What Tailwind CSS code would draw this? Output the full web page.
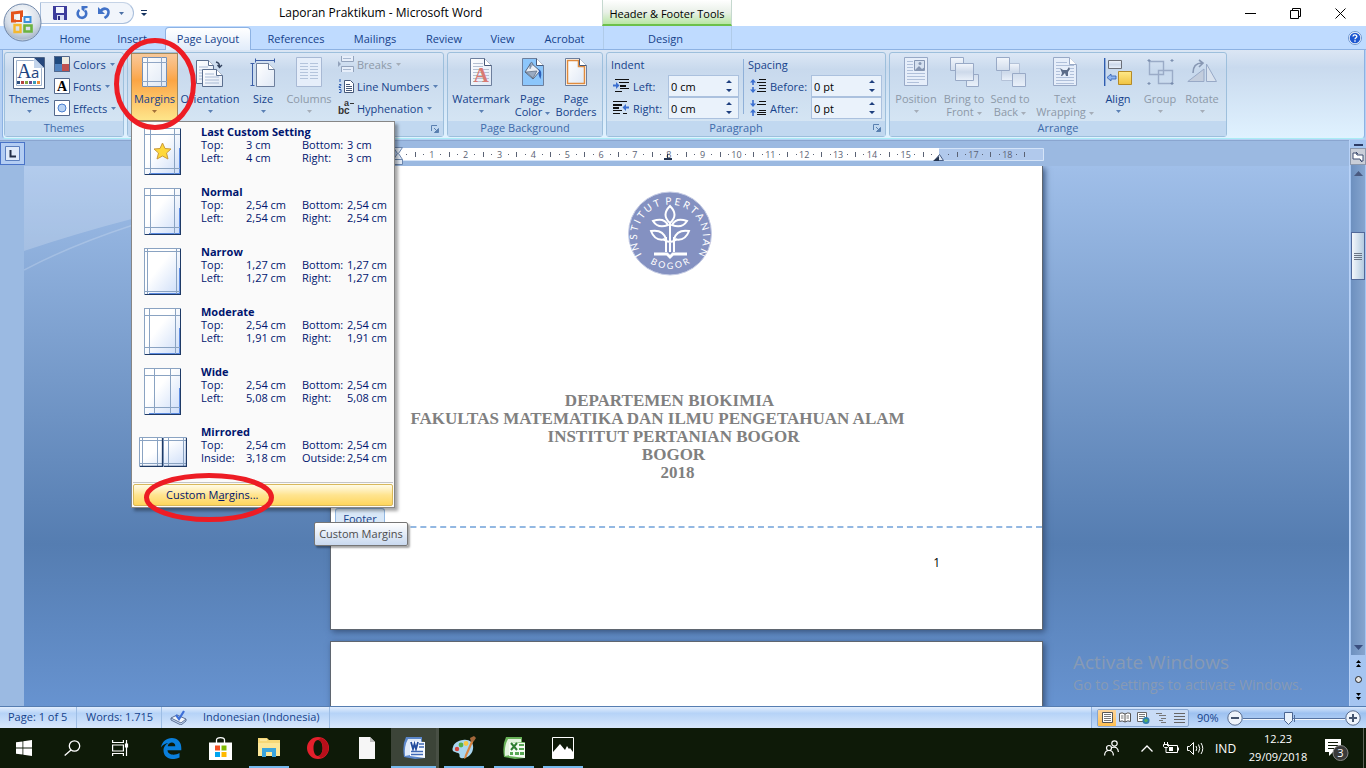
<!DOCTYPE html>
<html lang="en">
<head>
<meta charset="utf-8">
<title>Laporan Praktikum - Microsoft Word</title>
<script src="https://cdn.jsdelivr.net/npm/@tailwindcss/browser@4"></script>
</head>
<body class="relative flex h-screen flex-col overflow-hidden font-['Open_Sans','Noto_Sans',sans-serif] text-[11px] leading-[13px] text-[#15428b]">

<svg class="absolute h-0 w-0" aria-hidden="true">
  <defs>
    <linearGradient id="paper" x1="0" y1="0" x2="1" y2="1"><stop offset=".4" stop-color="#fff"/><stop offset="1" stop-color="#cbdcf8"/></linearGradient>
    <linearGradient id="sheet" x1="0" y1="0" x2="1" y2="1"><stop offset="0" stop-color="#fff"/><stop offset="1" stop-color="#dfe8f5"/></linearGradient>
    <linearGradient id="steel" x1="0" y1="0" x2="0" y2="1"><stop offset="0" stop-color="#f2f6fc"/><stop offset=".5" stop-color="#cdd9ea"/><stop offset="1" stop-color="#eaf1fa"/></linearGradient>
    <linearGradient id="gold" x1="0" y1="0" x2="0" y2="1"><stop offset="0" stop-color="#ffe989"/><stop offset="1" stop-color="#f0c341"/></linearGradient>
    <symbol id="thumb" viewBox="0 0 37 47"><rect width="37" height="47" fill="#8aa3c2"/><rect x="1" y="1" width="35" height="45" fill="url(#paper)"/><path d="M36.500 1v46M1 46.500h36" stroke="#1f3a66"/><path d="M35.500 20v26M5 45.500h31" stroke="#5b8ae0"/></symbol>
    <symbol id="down" viewBox="0 0 5 3"><path d="M0 0h5L2.500 3z" fill="currentColor"/></symbol>
    <symbol id="launch" viewBox="0 0 8 8"><path d="M.5 6V.5H6" fill="none" stroke="#5a80b0"/><path d="M3 3l2 2" stroke="#5a80b0"/><path d="M7.500 3.500v4h-4z" fill="#5a80b0" stroke="#5a80b0"/></symbol>
  </defs>
</svg>

<!-- Title bar -->
<header class="relative flex h-[26px] shrink-0 items-stretch bg-white text-black">
  <div class="ml-[40px] flex h-[22px] w-[94px] items-center gap-2 self-start rounded-r-full border border-[#a9bfdc] border-t-[#c5d3e6] bg-[#f1f5fb] pl-[12px] mt-[2px]">
    <button aria-label="Save"><svg class="h-[14px] w-[14px]" viewBox="0 0 14 14"><path d="M0 0h14v14H1l-1-1z" fill="#3c3c9c"/><path d="M3 1h8v6H3z" fill="#f3f6ff"/><path d="M4 9h7v5H4z" fill="#d8def5"/><path d="M5 10h2v4H5z" fill="#2c2c80"/></svg></button>
    <button aria-label="Redo"><svg class="h-[14px] w-[14px]" viewBox="0 0 14 14"><path d="M4.500 4A4.300 4.300 0 1 0 10 4.500" fill="none" stroke="#4172c8" stroke-width="2.600"/><path d="M6.500 0h6v2l-3 .5V6l-3-2.500z" fill="#4172c8"/></svg></button>
    <button aria-label="Undo"><svg class="h-[14px] w-[14px]" viewBox="0 0 14 14"><path d="M3 6c3-5 9-4 8.500.5C11.300 10 9 11 7.500 12" fill="none" stroke="#4172c8" stroke-width="2.600"/><path d="M1 1v7h7z" fill="#4172c8"/></svg></button>
    <button aria-label="Undo list"><svg class="h-[3px] w-[5px] text-[#4a6fa5]"><use href="#down"/></svg></button>
  </div>
  <button aria-label="Customize toolbar" class="ml-[7px] self-center"><svg class="h-[7px] w-[6px]" viewBox="0 0 6 7"><path d="M0 .5h6" stroke="#15325f"/><path d="M0 3h6L3 6z" fill="#15325f"/></svg></button>
  <h1 class="ml-[132px] w-[196px] self-center text-center text-[12px] leading-[16px] whitespace-nowrap">Laporan Praktikum - Microsoft Word</h1>
  <div class="ml-[127px] flex w-[130px] items-center justify-center border-x border-b-2 border-x-[#c5d8cf] border-b-[#6cc04a] bg-linear-to-b from-white via-[#e9f0e8] to-[#b9e6a4] pt-[2px] whitespace-nowrap">Header &amp; Footer Tools</div>
  <div class="ml-auto flex items-center">
    <button aria-label="Minimize" class="flex w-[46px] justify-center"><svg class="h-[11px] w-[11px]" viewBox="0 0 11 11"><path d="M0 5.500h11" stroke="#000"/></svg></button>
    <button aria-label="Restore" class="flex w-[45px] justify-center"><svg class="h-[11px] w-[11px]" viewBox="0 0 11 11"><path d="M.5 2.500h8v8h-8zM2.500 2V.5h8v8H9" fill="none" stroke="#000"/></svg></button>
    <button aria-label="Close" class="flex w-[45px] justify-center"><svg class="h-[11px] w-[11px]" viewBox="0 0 11 11"><path d="M.5.500l10 10M10.500.500l-10 10" stroke="#000"/></svg></button>
    <span class="w-[3px]"></span>
  </div>
</header>

<!-- Ribbon tabs -->
<nav class="flex h-[24px] shrink-0 items-stretch border-b border-[#8db2e3] bg-[#bfdbff] pl-[46px] leading-[25px] whitespace-nowrap">
  <button class="w-[58px]">Home</button>
  <button class="w-[56px]">Insert</button>
  <button class="-mb-px ml-[5px] mt-px w-[86px] rounded-t-[4px] border border-b-0 border-[#8db2e3] bg-linear-to-b from-white to-[#e1ecfa] leading-[22px]">Page Layout</button>
  <button class="w-[90px]">References</button>
  <button class="w-[68px]">Mailings</button>
  <button class="w-[70px]">Review</button>
  <button class="w-[47px]">View</button>
  <button class="w-[77px]">Acrobat</button>
  <button class="w-[129px] border-x border-[#b0cbe9] pr-1">Design</button>
  <button aria-label="Help" class="ml-auto mr-1 self-center"><svg class="h-[14px] w-[14px]" viewBox="0 0 14 14"><circle cx="7" cy="7" r="6.500" fill="#fff" stroke="#6d94ce"/><circle cx="7" cy="7" r="5.300" fill="#1d56d0"/><path d="M5 5.500c.2-2.300 4-2 3.800.2C8.700 6.800 7 6.800 7 8.300M7 9.300v1.400" fill="none" stroke="#fff" stroke-width="1.400"/></svg></button>
</nav>

<!-- Ribbon -->
<section class="flex h-[90px] shrink-0 bg-[#b5d0f3] pb-[1px] pl-[2px] pr-[1px]">
 <div class="flex min-w-0 flex-1 items-start gap-[3px] rounded-b-[4px] border border-t-0 border-[#8db2e3] border-b-[#a9ecf5] bg-linear-to-b from-[#dbe6f4] via-[#c9daee] via-20% to-[#e0f2ff] pl-px pt-[2px]">

  <div class="flex h-[85px] w-[120px] shrink-0 flex-col rounded-[3px] border border-[#9dbfdc] bg-linear-to-b from-[#dce7f5] via-[#c8d9ed] via-20% to-[#d8e8f5]">
    <div class="flex flex-1">
      <button class="flex w-[48px] flex-col items-center pt-[4px]">
        <span class="h-[35px]"><svg class="h-[32px] w-[32px]" viewBox="0 0 32 32"><path d="M.5.500h31v31H.5z" fill="#fff" stroke="#4f6485"/><path d="M3.500 3.500h17l8 8v17h-25z" fill="#fff" stroke="#9fb2cc"/><path d="M21 1h10v10z" fill="#26477c"/><path d="M21 1v10h10z" fill="#c2d4ec"/><text x="4" y="21" font-family="Liberation Serif" font-size="20" fill="#1d4481">A</text><text x="18" y="21" font-family="Open Sans" font-size="15" fill="#1d4481">a</text><path d="M4 24h3v3H4z" fill="#30517f"/><path d="M8 24h3v3H8z" fill="#b54441"/><path d="M12 24h3v3h-3z" fill="#83a543"/><path d="M16 24h3v3h-3z" fill="#6a4d92"/><path d="M20 24h3v3h-3z" fill="#3c9cb8"/><path d="M24 24h3v3h-3z" fill="#f08c35"/></svg></span>
        <span>Themes</span><svg class="mt-[5px] h-[3px] w-[5px] text-[#5a80b4]"><use href="#down"/></svg>
      </button>
      <div class="flex flex-col pl-px">
        <button class="flex h-[22px] items-center gap-[3px]"><svg class="h-[16px] w-[16px]" viewBox="0 0 16 16"><path d="M0 0h8v8H0z" fill="#1f497d"/><path d="M8 0h8v8H8z" fill="#eeece1"/><path d="M0 8h8v8H0z" fill="#4f81bd"/><path d="M8 8h8v8H8z" fill="#c0504d"/><path d="M.5.500h15v15H.5z" fill="none" stroke="#53688c"/></svg>Colors<svg class="ml-px h-[3px] w-[5px] text-[#5a80b4]"><use href="#down"/></svg></button>
        <button class="flex h-[22px] items-center gap-[3px]"><svg class="h-[16px] w-[16px]" viewBox="0 0 16 16"><path d="M.5.500h15v15H.5z" fill="#fff" stroke="#53688c"/><text x="8" y="13" text-anchor="middle" font-family="Liberation Serif" font-size="14" font-weight="bold">A</text></svg>Fonts<svg class="ml-px h-[3px] w-[5px] text-[#5a80b4]"><use href="#down"/></svg></button>
        <button class="flex h-[22px] items-center gap-[3px]"><svg class="h-[16px] w-[16px]" viewBox="0 0 16 16"><path d="M.5.500h15v15H.5z" fill="#fff" stroke="#53688c"/><circle cx="8" cy="8" r="4" fill="#b9d3f4" stroke="#4a7fcf"/></svg>Effects<svg class="ml-px h-[3px] w-[5px] text-[#5a80b4]"><use href="#down"/></svg></button>
      </div>
    </div>
    <div class="h-[15px] bg-[#c1d8f0] text-center text-[#3e6aaa]">Themes</div>
  </div>

  <div class="flex h-[85px] w-[317px] shrink-0 flex-col rounded-[3px] border border-[#9dbfdc] bg-linear-to-b from-[#dce7f5] via-[#c8d9ed] via-20% to-[#d8e8f5]">
    <div class="flex flex-1 pl-[3px]">
      <button class="flex w-[47px] flex-col items-center border border-[#a08a60] bg-linear-to-b from-[#f8c99a] via-[#fba544] via-40% to-[#fde58a] pt-[3px]">
        <span class="h-[35px]"><svg class="h-[30px] w-[25px]" viewBox="0 0 25 30"><path d="M.5.500h24v29H.5z" fill="url(#sheet)" stroke="#7590b5"/><path d="M5.500 0v30M19.500 0v30M0 5.500h25M0 24.500h25" stroke="#8fa5c4"/></svg></span>
        <span>Margins</span><svg class="mt-[5px] h-[3px] w-[5px] text-[#a0703a]"><use href="#down"/></svg>
      </button>
      <button class="flex w-[64px] flex-col items-center pt-[4px]">
        <span class="h-[35px]"><svg class="h-[32px] w-[28px]" viewBox="0 0 28 32"><path d="M.5 3.500h12l5 5v18H.5z" fill="url(#sheet)" stroke="#5b6f8f"/><path d="M12.500 3.500v5h5" fill="#fff" stroke="#5b6f8f"/><path d="M3 10h9M3 13h12M3 16h10M3 19h10M3 22h10" stroke="#a9bad4"/><path d="M6.500 12.500h14l6 6v11h-20z" fill="url(#sheet)" stroke="#5b6f8f"/><path d="M20.500 12.500v6h6" fill="#fff" stroke="#5b6f8f"/><path d="M9 17h9M9 20h14M9 23h14M9 26h14" stroke="#a9bad4"/><path d="M20 5q4 1 3.500 5M21.500 8l2 2.500L26 8" fill="none" stroke="#33435f" stroke-width="1.300"/></svg></span>
        <span>Orientation</span><svg class="mt-[5px] h-[3px] w-[5px] text-[#5a80b4]"><use href="#down"/></svg>
      </button>
      <button class="flex w-[42px] flex-col items-center pt-[4px]">
        <span class="h-[35px]"><svg class="h-[32px] w-[26px]" viewBox="0 0 26 32"><path d="M6.500 6.500h12l6 6v17h-18z" fill="url(#sheet)" stroke="#6d7f9d"/><path d="M18.500 6.500v6h6" fill="#fff" stroke="#6d7f9d"/><path d="M5 3.500h20M5.500 1.500v4M24.500 1.500v4M2.500 6v23M.5 6.500h4M.5 28.500h4" stroke="#3c5ea6" fill="none"/></svg></span>
        <span>Size</span><svg class="mt-[5px] h-[3px] w-[5px] text-[#5a80b4]"><use href="#down"/></svg>
      </button>
      <button disabled class="flex w-[50px] flex-col items-center pt-[4px] text-[#8d99a8]">
        <span class="h-[35px]"><svg class="h-[30px] w-[26px]" viewBox="0 0 26 30"><path d="M.5.500h25v29H.5z" fill="#e6eefa" stroke="#a8b9d4"/><path d="M4 6.500h8M4 9.500h8M4 12.500h8M4 15.500h8M4 18.500h8M4 21.500h8M14 6.500h8M14 9.500h8M14 12.500h8M14 15.500h8M14 18.500h8M14 21.500h8" stroke="#b4c4dc"/></svg></span>
        <span>Columns</span><svg class="mt-[5px] h-[3px] w-[5px] text-[#a5adb8]"><use href="#down"/></svg>
      </button>
      <div class="ml-[4px] flex flex-col">
        <button disabled class="flex h-[22px] items-center gap-[3px] text-[#8d99a8]"><svg class="h-[16px] w-[16px]" viewBox="0 0 16 16"><path d="M3.500 0v5.500h12V0M3.500 16v-5.500h12V16" fill="#e6eefa" stroke="#93a3bc"/><path d="M5 2.500h8M5 13.500h8" stroke="#a8b8d0"/><path d="M0 5l3 3-3 3z" fill="#93a3bc"/></svg>Breaks<svg class="ml-px h-[3px] w-[5px] text-[#a5adb8]"><use href="#down"/></svg></button>
        <button class="flex h-[22px] items-center gap-[3px]"><svg class="h-[16px] w-[16px]" viewBox="0 0 16 16"><path d="M6.500 2.500h6l3 3v9h-9z" fill="#fff" stroke="#46597a"/><path d="M8 6.500h4M8 8.500h6M8 10.500h6M8 12.500h6" stroke="#46597a"/><path d="M2 1v3M1 6.500h2v1l-2 1v1h2M1 11.500h2v3H1" fill="none" stroke="#2f5db0"/></svg>Line Numbers<svg class="ml-px h-[3px] w-[5px] text-[#5a80b4]"><use href="#down"/></svg></button>
        <button class="flex h-[22px] items-center gap-[3px]"><svg class="h-[16px] w-[16px]" viewBox="0 0 16 16" fill="#333"><text x="0" y="14" font-family="Liberation Sans" font-weight="bold" font-size="10">bc</text><text x="6" y="6" font-family="Liberation Sans" font-weight="bold" font-size="9">a</text><path d="M12 3h4v1H12z"/></svg>Hyphenation<svg class="ml-px h-[3px] w-[5px] text-[#5a80b4]"><use href="#down"/></svg></button>
      </div>
    </div>
    <div class="flex h-[15px] items-center justify-end bg-[#c1d8f0] pr-[4px]"><button aria-label="Page Setup options"><svg class="h-2 w-2"><use href="#launch"/></svg></button></div>
  </div>

  <div class="flex h-[85px] w-[156px] shrink-0 flex-col rounded-[3px] border border-[#9dbfdc] bg-linear-to-b from-[#dce7f5] via-[#c8d9ed] via-20% to-[#d8e8f5]">
    <div class="flex flex-1">
      <button class="flex w-[66px] flex-col items-center pt-[4px]">
        <span class="h-[35px]"><svg class="h-[31px] w-[22px]" viewBox="0 0 22 31"><path d="M.5 1.500h14l7 7v20H.5z" fill="url(#sheet)" stroke="#6d7f9d"/><path d="M14.500 1.500v7h7" fill="#fff" stroke="#46597a"/><path d="M3 6.500h10M3 9.500h10M3 12.500h16M3 15.500h16M3 18.500h16M3 21.500h16M3 24.500h16" stroke="#b5c0d2"/><text x="11" y="25" text-anchor="middle" font-family="Liberation Serif" font-size="21" font-weight="bold" fill="#d97a72">A</text></svg></span>
        <span>Watermark</span><svg class="mt-[5px] h-[3px] w-[5px] text-[#5a80b4]"><use href="#down"/></svg>
      </button>
      <button class="flex w-[37px] flex-col items-center pt-[4px]">
        <span class="h-[35px]"><svg class="h-[31px] w-[22px]" viewBox="0 0 22 31"><path d="M.5 1.500h14l7 7v20H.5z" fill="#8cc6fb" stroke="#6d7f9d"/><path d="M14.500 1.500v7h7" fill="#fff" stroke="#46597a"/><path d="M9 6l9 8-7 8-8-7z" fill="#e8edf4" stroke="#56657d"/><path d="M8 12V7q2-4 3 1M4 15l11-1-4 7z" fill="#9aabc2" stroke="#56657d" stroke-width=".7"/><path d="M16 12q5 1 2.500 10-3-5-1.500-8z" fill="#2d5fb8"/></svg></span>
        <span class="text-center whitespace-nowrap">Page<br>Color<svg class="ml-[3px] inline h-[3px] w-[5px] text-[#5a80b4]"><use href="#down"/></svg></span>
      </button>
      <button class="flex w-[50px] flex-col items-center pt-[4px]">
        <span class="h-[35px]"><svg class="h-[31px] w-[22px]" viewBox="0 0 22 31"><path d="M.5 1.500h14l7 7v20H.5z" fill="#fff" stroke="#6d7f9d"/><path d="M2.500 3.500h11v6h6v17h-17z" fill="url(#sheet)" stroke="#e08b3e" stroke-width="1.500"/><path d="M14.500 1.500v7h7" fill="#fff" stroke="#46597a"/></svg></span>
        <span>Page<br>Borders</span>
      </button>
    </div>
    <div class="h-[15px] bg-[#c1d8f0] text-center text-[#3e6aaa]">Page Background</div>
  </div>

  <div class="flex h-[85px] w-[280px] shrink-0 flex-col rounded-[3px] border border-[#9dbfdc] bg-linear-to-b from-[#dce7f5] via-[#c8d9ed] via-20% to-[#d8e8f5]">
    <div class="flex flex-1 pl-[4px]">
      <div class="w-[128px]">
        <div class="h-[22px] leading-[24px]">Indent</div>
        <div class="flex h-[22px] items-center"><svg class="ml-[2px] mr-[4px] h-[16px] w-[16px]" viewBox="0 0 16 16"><path d="M2 1.500h14M7 4.500h9M7 7.500h6M7 10.500h9M2 13.500h7" stroke="#111"/><path d="M6 4.500h10M7 8.500h6" stroke="#111"/><path d="M0 7.500h4" stroke="#3b6fd0" stroke-width="2"/><path d="M3 4l3.500 3.500L3 11z" fill="#3b6fd0"/></svg><label for="il" class="w-[35px]">Left:</label>
          <span class="flex h-[22px] w-[71px] items-center justify-between border border-[#abc1de] bg-[#eaf2fb] pl-[2px] pr-[6px]"><input id="il" value="0 cm" class="w-[40px] bg-transparent text-black outline-none"><svg class="h-[14px] w-[6px]" viewBox="0 0 6 14"><path d="M0 4h6L3 1zM0 10h6l-3 3z" fill="#1e3f7e"/></svg></span></div>
        <div class="flex h-[22px] items-center"><svg class="ml-[2px] mr-[4px] h-[16px] w-[16px]" viewBox="0 0 16 16"><path d="M0 1.500h14M0 4.500h9M0 5.500h9M0 7.500h6M0 8.500h6M0 10.500h9M0 13.500h7M10 13.500h4" stroke="#111"/><path d="M12 7.500h4" stroke="#3b6fd0" stroke-width="2"/><path d="M13 4L9.500 7.500 13 11z" fill="#3b6fd0"/></svg><label for="ir" class="w-[35px]">Right:</label>
          <span class="flex h-[22px] w-[71px] items-center justify-between border border-[#abc1de] bg-[#eaf2fb] pl-[2px] pr-[6px]"><input id="ir" value="0 cm" class="w-[40px] bg-transparent text-black outline-none"><svg class="h-[14px] w-[6px]" viewBox="0 0 6 14"><path d="M0 4h6L3 1zM0 10h6l-3 3z" fill="#1e3f7e"/></svg></span></div>
      </div>
      <div class="mx-[4px] mt-[6px] h-[55px] w-px bg-[#8fb0d8]"></div>
      <div class="w-[134px]">
        <div class="h-[22px] leading-[24px]">Spacing</div>
        <div class="flex h-[22px] items-center"><svg class="ml-[2px] mr-[4px] h-[16px] w-[16px]" viewBox="0 0 16 16"><path d="M9 1.500h7M7 4.500h9M9 7.500h7M9 10.500h7M7 13.500h9" stroke="#111"/><path d="M3 7V2M3 9v5" stroke="#3b6fd0" stroke-width="1.600"/><path d="M0 4.500L3 1l3 3.500zM0 11.500L3 15l3-3.500z" fill="#3b6fd0"/></svg><label for="sb" class="w-[41px]">Before:</label>
          <span class="flex h-[22px] w-[71px] items-center justify-between border border-[#abc1de] bg-[#eaf2fb] pl-[2px] pr-[6px]"><input id="sb" value="0 pt" class="w-[40px] bg-transparent text-black outline-none"><svg class="h-[14px] w-[6px]" viewBox="0 0 6 14"><path d="M0 4h6L3 1zM0 10h6l-3 3z" fill="#1e3f7e"/></svg></span></div>
        <div class="flex h-[22px] items-center"><svg class="ml-[2px] mr-[4px] h-[16px] w-[16px]" viewBox="0 0 16 16"><path d="M9 1.500h7M7 4.500h9M9 10.500h7M7 12.500h9M7 14.500h9" stroke="#111"/><path d="M3 0v5M3 16v-5" stroke="#3b6fd0" stroke-width="1.600"/><path d="M0 3.500L3 7l3-3.500zM0 12.500L3 9l3 3.500z" fill="#3b6fd0"/></svg><label for="sa" class="w-[41px]">After:</label>
          <span class="flex h-[22px] w-[71px] items-center justify-between border border-[#abc1de] bg-[#eaf2fb] pl-[2px] pr-[6px]"><input id="sa" value="0 pt" class="w-[40px] bg-transparent text-black outline-none"><svg class="h-[14px] w-[6px]" viewBox="0 0 6 14"><path d="M0 4h6L3 1zM0 10h6l-3 3z" fill="#1e3f7e"/></svg></span></div>
      </div>
    </div>
    <div class="relative h-[15px] bg-[#c1d8f0] pr-5 text-center text-[#3e6aaa]">Paragraph<button aria-label="Paragraph options" class="absolute right-[4px] top-[3px]"><svg class="h-2 w-2"><use href="#launch"/></svg></button></div>
  </div>

  <div class="flex h-[85px] w-[338px] shrink-0 flex-col rounded-[3px] border border-[#9dbfdc] bg-linear-to-b from-[#dce7f5] via-[#c8d9ed] via-20% to-[#d8e8f5]">
    <div class="flex flex-1 pl-px text-center whitespace-nowrap text-[#8d99a8]">
      <button disabled class="flex w-[50px] flex-col items-center pt-[4px]">
        <span class="h-[35px]"><svg class="h-[29px] w-[24px]" viewBox="0 0 24 29"><path d="M.5.500h23v28H.5z" fill="#e6eefa" stroke="#98a9c6"/><path d="M3 4.500h6M3 7.500h6M3 10.500h6M3 13.500h6M3 16.500h18M3 19.500h18M3 22.500h18M3 25.500h12" stroke="#b0c0da"/><path d="M10.500 3.500h10v10h-10z" fill="#d6e1f0" stroke="#8797b3"/><path d="M11 13l4-4 3 3 3-2v3z" fill="#8797b3"/><circle cx="16" cy="6.500" r="1.500" fill="#8797b3"/></svg></span>
        <span>Position</span><svg class="mt-[5px] h-[3px] w-[5px] text-[#a5adb8]"><use href="#down"/></svg>
      </button>
      <button disabled class="flex w-[46px] flex-col items-center pt-[4px]">
        <span class="h-[35px]"><svg class="h-[31px] w-[31px]" viewBox="0 0 31 31"><path d="M1.500.500h13v13h-13zM17.500 17.500h12v12h-12z" fill="url(#steel)" stroke="#98a9c6"/><path d="M6.500 6.500h18v17h-18z" fill="url(#steel)" stroke="#98a9c6"/></svg></span>
        <span>Bring to<br>Front<svg class="ml-[3px] inline h-[3px] w-[5px] text-[#a5adb8]"><use href="#down"/></svg></span>
      </button>
      <button disabled class="flex w-[46px] flex-col items-center pt-[4px]">
        <span class="h-[35px]"><svg class="h-[31px] w-[31px]" viewBox="0 0 31 31"><path d="M6.500 6.500h18v17h-18z" fill="url(#steel)" stroke="#b4c2d8"/><path d="M1.500.500h13v13h-13zM17.500 16.500h13v13h-13z" fill="url(#steel)" stroke="#98a9c6"/></svg></span>
        <span>Send to<br>Back<svg class="ml-[3px] inline h-[3px] w-[5px] text-[#a5adb8]"><use href="#down"/></svg></span>
      </button>
      <button disabled class="flex w-[64px] flex-col items-center pt-[4px]">
        <span class="h-[35px]"><svg class="h-[30px] w-[24px]" viewBox="0 0 24 30"><path d="M.5.500h16l7 7v21H.5z" fill="#e6eefa" stroke="#98a9c6"/><path d="M16.500.500v7h7" fill="#fff" stroke="#98a9c6"/><path d="M3 5.500h11M3 8.500h18M3 11.500h4M17 11.500h4M3 14.500h4M17 14.500h4M3 17.500h4M17 17.500h4M3 20.500h18M3 23.500h18M3 26.500h18" stroke="#b0c0da"/><path d="M7 11l3 2h4l2-3 1 2-2 3v4h-2l-1-3-3 3H8l1-3z" fill="#5c6c88"/></svg></span>
        <span>Text<br>Wrapping<svg class="ml-[3px] inline h-[3px] w-[5px] text-[#a5adb8]"><use href="#down"/></svg></span>
      </button>
      <button class="flex w-[42px] flex-col items-center pt-[4px] text-[#15428b]">
        <span class="h-[35px]"><svg class="h-[31px] w-[28px]" viewBox="0 0 28 31"><path d="M.7 1v28" stroke="#2f5db0" stroke-width="1.400"/><path d="M4.500 3.500h13v8h-13z" fill="url(#steel)" stroke="#6b6f78"/><path d="M14.500 14.500h13v13h-13z" fill="url(#gold)" stroke="#b48a28"/><path d="M3 20.500l4-3.500v2h5v3H7v2z" fill="#8fb5f0" stroke="#2f5db0" stroke-width=".8"/></svg></span>
        <span>Align</span><svg class="mt-[5px] h-[3px] w-[5px] text-[#5a80b4]"><use href="#down"/></svg>
      </button>
      <button disabled class="flex w-[42px] flex-col items-center pt-[4px]">
        <span class="h-[35px]"><svg class="h-[31px] w-[28px]" viewBox="0 0 28 31" fill="none" stroke="#9aabc7"><path d="M3.500 4.500h14v13h-14zM12.500 13.500h14v13h-14z" stroke-width="1.400"/><path d="M2 3h2v1H2zM25 3h2v1h-2zM2 26h2v1H2zM25 26h2v1h-2z" stroke="#7386a8"/></svg></span>
        <span>Group</span><svg class="mt-[5px] h-[3px] w-[5px] text-[#a5adb8]"><use href="#down"/></svg>
      </button>
      <button disabled class="flex w-[42px] flex-col items-center pt-[4px]">
        <span class="h-[35px]"><svg class="h-[31px] w-[30px]" viewBox="0 0 30 31"><path d="M17 24.500V12L.8 24.500z" fill="#c3cddd" stroke="#98a9c6"/><path d="M19.500 24.500V7l10 17.500z" fill="#d9e2ee" stroke="#98a9c6"/><path d="M6 16Q6 6 15 6M12 3l4 3-4 4" fill="none" stroke="#8797b3" stroke-width="1.600"/></svg></span>
        <span>Rotate</span><svg class="mt-[5px] h-[3px] w-[5px] text-[#a5adb8]"><use href="#down"/></svg>
      </button>
    </div>
    <div class="h-[15px] bg-[#c1d8f0] text-center text-[#3e6aaa]">Arrange</div>
  </div>
 </div>
</section>

<!-- Document area -->
<main class="flex min-h-0 flex-1">
  <div class="flex min-w-0 flex-1 flex-col">
    <div class="flex h-[26px] shrink-0 border-t border-[#8aa5cf] bg-[#9bb9e1]">
      <button aria-label="Tab stop" class="my-px flex w-[25px] items-center justify-center border border-[#4a74c8] bg-[#b3cdf3]"><svg class="h-[15px] w-[15px]" viewBox="0 0 15 15"><path d="M.5.500h14v14H.5z" fill="#dfeafa" stroke="#5b7fbe"/><path d="M5.500 4v6.500H11" fill="none" stroke="#222e48" stroke-width="2"/></svg></button>
      <div class="flex flex-1 items-center justify-center">
        <svg id="ruler" class="h-[24px] w-[714px]" viewBox="0 0 714 24"><path d="M.5 6.500h713v12H.5z" fill="#b1c9ec" stroke="#d5e4f8"/><path d="M68 6h541v12H68z" fill="#fff"/></svg>
      </div>
    </div>
    <div class="flex min-h-0 flex-1">
      <div class="w-6 shrink-0 bg-[#9bbae2]"></div>
      <div class="relative flex min-w-0 flex-1 flex-col items-center overflow-hidden bg-linear-to-b from-[#a0bfe9] via-[#557db1] via-70% to-[#6793d0]">
        <svg class="absolute left-0 top-0 h-[110px] w-[307px]" viewBox="0 0 307 110"><path d="M0 0h307v12Q140 38 0 85z" fill="#fff" opacity=".2"/><path d="M0 104Q80 62 200 34" fill="none" stroke="#fff" stroke-width="1.500" opacity=".2"/></svg>
        <article class="relative flex h-[464px] w-[713px] shrink-0 flex-col items-center border border-t-0 border-[#5f6670] bg-white pr-[34px] font-['Liberation_Serif',serif] shadow-[2px_2px_6px_#39557f]">
          <svg class="mt-[25px] h-[85px] w-[84px] shrink-0" viewBox="0 0 84 85">
            <defs><path id="arcTop" d="M14 64A33 33 0 1 1 70 64"/><path id="arcBottom" d="M16 67A36.500 36.500 0 0 0 68 67"/></defs>
            <circle cx="42" cy="42.500" r="41.500" fill="#8491c1" stroke="#c4cbe4"/>
            <g font-family="Lato, sans-serif" font-size="10" fill="#fff"><text><textPath href="#arcTop" startOffset="50%" text-anchor="middle">I N S T I T U T&#160; P E R T A N I A N</textPath></text><text font-size="9"><textPath href="#arcBottom" startOffset="50%" text-anchor="middle">B O G O R</textPath></text></g>
            <g fill="#8491c1" stroke="#fff" stroke-width="2"><path d="M42 15q-9 9 0 17 9-8 0-17z"/><path d="M40 34q-4-8-15-4 5 8 15 4zM44 34q4-8 15-4-5 8-15 4z"/><path d="M38 48q-3-10-15-8 4 11 15 8zM46 48q3-10 15-8-4 11-15 8z"/></g>
            <path d="M42 32v29M38 46v15M46 46v15M35 48q7 6 14 0" fill="none" stroke="#fff" stroke-width="2"/>
            <path d="M26 63h13l3 3 3-3h14" fill="none" stroke="#fff" stroke-width="3"/>
          </svg>
          <div class="mt-[116px] text-center text-[17px] leading-[18px] font-bold whitespace-nowrap text-[#808080]">
            <p>DEPARTEMEN BIOKIMIA</p>
            <p class="pr-6">FAKULTAS MATEMATIKA DAN ILMU PENGETAHUAN ALAM</p>
            <p class="pl-2">INSTITUT PERTANIAN BOGOR</p>
            <p class="pl-2">BOGOR</p>
            <p class="pl-4">2018</p>
          </div>
          <div class="absolute inset-x-0 top-[342px] border-b-2 border-dashed border-[#93b8e2] pl-[4px] font-['Open_Sans',sans-serif]"><span class="block h-[18px] w-[50px] rounded-t-[3px] border border-b-0 border-[#93b8e2] bg-[#d8e7f7] pt-[3px] text-center">Footer</span></div>
          <p class="absolute right-[102px] top-[390px] font-['Open_Sans',sans-serif] text-[12px] leading-[14px] text-black">1</p>
        </article>
        <article class="mt-[11px] h-[80px] w-[713px] shrink-0 border border-[#5f6670] bg-white shadow-[2px_2px_6px_#39557f]"></article>
        <div class="absolute bottom-[11px] right-[39px] w-[237px] font-['Open_Sans',sans-serif] whitespace-nowrap text-[#879ab4]"><p class="text-[19px] leading-[26px]">Activate Windows</p><p class="text-[14px] leading-[20px]">Go to Settings to activate Windows.</p></div>
      </div>
    </div>
  </div>
  <!-- Vertical scrollbar -->
  <div class="flex w-[17px] shrink-0 flex-col items-center border-l border-[#b9d3f8] bg-[#a5c5f1]">
    <div class="mt-[4px] h-[2px] w-[9px] shrink-0 bg-[#2d3c66]"></div>
    <button aria-label="View ruler" class="mt-[2px] flex h-[17px] w-[16px] shrink-0 items-center justify-center border border-[#8c98ac] bg-[#c9ced8]"><svg class="h-[12px] w-[12px]" viewBox="0 0 12 12"><path d="M1 2h3l1 2h6v6H9L8 8H1z" fill="#fff" stroke="#3f4d70"/><path d="M4 1l2 2M8 9l2 2" stroke="#3f4d70"/></svg></button>
    <div class="flex w-[14px] flex-1 flex-col items-center bg-linear-to-r from-[#6d90bf] to-[#86a5cf]">
      <button aria-label="Scroll up" class="mt-[6px]"><svg class="h-[5px] w-[9px]" viewBox="0 0 9 5"><path d="M0 5h9L4.500 0z" fill="#4a5a80"/></svg></button>
      <div class="mt-[56px] flex h-[48px] w-[14px] flex-col items-center justify-center gap-px border border-[#52699a] bg-linear-to-r from-[#f4f7fb] to-[#b4cbe0]"><i class="h-px w-[8px] bg-[#6c7686]"></i><i class="h-px w-[8px] bg-[#6c7686]"></i><i class="h-px w-[8px] bg-[#6c7686]"></i><i class="h-px w-[8px] bg-[#6c7686]"></i></div>
      <button aria-label="Scroll down" class="mt-auto mb-[5px]"><svg class="h-[5px] w-[9px]" viewBox="0 0 9 5"><path d="M0 0h9L4.500 5z" fill="#3a4f80"/></svg></button>
    </div>
    <button aria-label="Previous page" class="mt-[5px]"><svg class="h-[7px] w-[5px]" viewBox="0 0 5 7"><path d="M0 3h5L2.500 0zM0 7h5L2.500 4z"/></svg></button>
    <button aria-label="Select browse object" class="mt-[9px]"><svg class="h-[7px] w-[7px]" viewBox="0 0 7 7"><circle cx="3.500" cy="3.500" r="3" fill="#e5e5e5" stroke="#222"/></svg></button>
    <button aria-label="Next page" class="mt-[10px] mb-[6px]"><svg class="h-[7px] w-[5px]" viewBox="0 0 5 7"><path d="M0 0h5L2.500 3zM0 4h5L2.500 7z"/></svg></button>
  </div>
</main>

<!-- Status bar -->
<footer class="flex h-[22px] shrink-0 items-stretch border-t border-[#567db1] bg-linear-to-b from-[#e3eefd] via-[#b6d3f7] via-30% to-[#d8e7fb] leading-[20px] whitespace-nowrap">
  <span class="w-[77px] border-r border-[#9dbde4] pl-2">Page: 1 of 5</span>
  <span class="w-[85px] border-r border-[#9dbde4] pl-[9px]">Words: 1.715</span>
  <button aria-label="Proofing" class="ml-[8px] self-center"><svg class="h-[15px] w-[17px]" viewBox="0 0 17 15"><path d="M1 8l6-3 9 4-5 4z" fill="#f4f7fb" stroke="#5b6f94"/><path d="M1 8v2l10 5 5-4V9" fill="none" stroke="#5b6f94"/><path d="M6 5l3 4 5-8" fill="none" stroke="#3d6fd8" stroke-width="2.200"/></svg></button>
  <span class="w-[143px] border-r border-[#9dbde4] pl-4">Indonesian (Indonesia)</span>
  <div class="ml-auto flex items-center border-l border-[#8fb0dc] bg-linear-to-b from-[#d6e6fb] via-[#9dc1f0] via-30% to-[#c4dcfa] pl-[5px]">
    <div class="flex h-[18px] overflow-hidden rounded-[2px] border border-[#86a5d0] bg-[#c9dcf6]">
      <button aria-label="Print layout" class="flex w-[18px] items-center justify-center bg-linear-to-b from-[#fcd59c] to-[#ffc04d]"><svg class="h-[11px] w-[11px]" viewBox="0 0 11 11"><path d="M.5.500h10v10H.5z" fill="#fff" stroke="#555"/><path d="M2 2.500h7M2 4.500h7M2 6.500h7M2 8.500h7" stroke="#777"/></svg></button>
      <button aria-label="Full screen reading" class="flex w-[18px] items-center justify-center"><svg class="h-[11px] w-[12px]" viewBox="0 0 12 11"><path d="M6 2Q3 0 .5 1.500v8Q3 8 6 10q3-2 5.500-.5v-8Q9 0 6 2v8" fill="#fff" stroke="#555"/><path d="M2 4h2.500M2 6h2.500M7.500 4H10M7.500 6H10" stroke="#777"/></svg></button>
      <button aria-label="Web layout" class="flex w-[18px] items-center justify-center"><svg class="h-[12px] w-[13px]" viewBox="0 0 13 12"><path d="M.5.500h9v9h-9z" fill="#fff" stroke="#666"/><path d="M2 2.500h6M2 4.500h6M2 6.500h4" stroke="#777"/><circle cx="9" cy="8.500" r="3.500" fill="#2f7fae"/><path d="M7 8q2-2 4 0-1 3-3 2z" fill="#58b05c"/></svg></button>
      <button aria-label="Outline" class="flex w-[18px] items-center justify-center"><svg class="h-[10px] w-[10px]" viewBox="0 0 10 10"><path d="M0 .5h6M3 2.500h7M5 5.500h5M3 7.500h4M5 9.500h5" stroke="#777"/></svg></button>
      <button aria-label="Draft" class="flex w-[18px] items-center justify-center"><svg class="h-[10px] w-[11px]" viewBox="0 0 11 10"><path d="M0 .5h11M0 3.500h11M0 6.500h11M0 9.500h11" stroke="#666"/></svg></button>
    </div>
    <span class="ml-[8px] w-[30px]">90%</span>
    <button aria-label="Zoom out"><svg class="h-[16px] w-[16px]" viewBox="0 0 16 16"><circle cx="8" cy="8" r="7.200" fill="#eef4fc" stroke="#5c6f90"/><path d="M4 7h8v2H4z" fill="#44546f"/></svg></button>
    <svg class="h-[16px] w-[102px]" viewBox="0 0 102 16" role="img" aria-label="Zoom slider"><path d="M0 8.500h102" stroke="#54719f"/><path d="M0 9.500h102" stroke="#f2f7fd"/><path d="M51.500 5v7" stroke="#54719f"/><path d="M41.500 2.500h8v8l-4 4-4-4z" fill="#e9f1fb" stroke="#4b6591"/></svg>
    <button aria-label="Zoom in" class="mr-[5px]"><svg class="h-[16px] w-[16px]" viewBox="0 0 16 16"><circle cx="8" cy="8" r="7.200" fill="#eef4fc" stroke="#5c6f90"/><path d="M4 7h3V4h2v3h3v2H9v3H7V9H4z" fill="#44546f"/></svg></button>
  </div>
</footer>

<!-- Windows taskbar -->
<footer class="flex h-[40px] shrink-0 items-stretch bg-[#0e1a08] text-white">
  <button aria-label="Start" class="flex w-[48px] items-center justify-center"><svg class="h-[16px] w-[16px]" viewBox="0 0 16 16" fill="#fff"><path d="M0 2.300L6.500 1.400v6.200H0zM7.300 1.300L16 0v7.600H7.300zM0 8.400h6.500v6.200L0 13.700zM7.300 8.400H16V16l-8.700-1.300z"/></svg></button>
  <button aria-label="Search" class="flex w-[48px] items-center justify-center"><svg class="h-[16px] w-[17px]" viewBox="0 0 17 16" fill="none" stroke="#fff" stroke-width="1.300"><circle cx="10.500" cy="6" r="5.200"/><path d="M7 10L.7 15.500"/></svg></button>
  <button aria-label="Task view" class="flex w-[48px] items-center justify-center"><svg class="h-[16px] w-[17px]" viewBox="0 0 17 16" fill="none" stroke="#fff" stroke-width="1.200"><path d="M.6 0v2.500h10.800V0M.6 16v-2.500h10.800V16M.6 5h10.800v6H.6zM14.500 0v16"/><path d="M13.500 4h2v3h-2z" fill="#fff"/></svg></button>
  <button aria-label="Edge" class="ml-[3px] flex w-[49px] items-center justify-center"><svg class="h-[21px] w-[21px]" viewBox="0 0 21 21"><path d="M0 9.500C1 3.500 5.500 0 10.800 0 17 0 20.300 4.500 20.300 10v2.300H6.500c.3 5 7.500 5.500 12 2.700v4.500C11.500 23 2.500 20.500 2.500 12.500c0-4 2.500-6.500 5-7.500C4 5.300 1.500 7 0 9.500zm6.700-1.300h7.600c0-5-6.800-4.600-7.600 0z" fill="#0a7fdc"/></svg></button>
  <button aria-label="Store" class="flex w-[48px] items-center justify-center"><svg class="h-[23px] w-[23px]" viewBox="0 0 23 23"><path d="M0 5.500h23V23H0z" fill="#fff"/><path d="M7.500 6V3q0-2.300 4-2.300t4 2.300v3" fill="none" stroke="#fff" stroke-width="1.300"/><path d="M6 8.500h5v5H6z" fill="#f25022"/><path d="M12.500 8.500h5v5h-5z" fill="#7fba00"/><path d="M6 15h5v5H6z" fill="#00a4ef"/><path d="M12.500 15h5v5h-5z" fill="#ffb900"/></svg></button>
  <button aria-label="File Explorer" class="flex w-[49px] flex-col items-center justify-end"><svg class="mb-[9px] h-[19px] w-[22px]" viewBox="0 0 22 19"><path d="M0 0h9l2 2h11v16H0z" fill="#f6d877"/><path d="M0 5h22v13H0z" fill="#fce798"/><path d="M2 2h7" stroke="#fff3c0"/><path d="M4 10h14v9h-4v-5H8v5H4z" fill="#3aa5dd"/></svg><i class="h-[2px] w-[40px] bg-[#76b9ed]"></i></button>
  <button aria-label="Opera" class="flex w-[49px] items-center justify-center"><svg class="h-[22px] w-[22px]" viewBox="0 0 22 22"><path fill-rule="evenodd" d="M11 0a11 11 0 1 0 0 22 11 11 0 0 0 0-22zm0 3c3 0 4.500 4 4.500 8S14 19 11 19s-4.500-4-4.500-8S8 3 11 3z" fill="#e3202c"/><path d="M14 1l-3 2c7 1 6 15 0 16l3 2c10-3 10-17 0-20z" fill="#b80f1a"/></svg></button>
  <button aria-label="Document" class="flex w-[49px] items-center justify-center"><svg class="h-[22px] w-[16px]" viewBox="0 0 16 22"><path d="M0 0h11l5 5v17H0z" fill="#f6f6f6"/><path d="M11 0v5h5z" fill="#bdbdbd"/></svg></button>
  <button aria-label="Word" class="flex w-[48px] flex-col items-center justify-end border-r-3 border-[#484f44] bg-[#3c4438]"><svg class="mb-[7px] h-[22px] w-[22px]" viewBox="0 0 22 22"><path d="M3 0h16v5h3v16l-10 1-11-2Q-1 8 3 0z" fill="#5b86c9"/><path d="M5 2h13v3H7v13l-5 1Q1 9 5 2z" fill="#dfe9f8"/><path d="M7 4l15 1v16L7 19z" fill="#f7faff"/><path d="M8 5l2 7 1.500-5L13 12l2-7" fill="none" stroke="#234c9e" stroke-width="1.800"/><path d="M16 7h5M16 10h5M8 14.500h12M8 17.500h12" stroke="#3f68b5" stroke-width="1.600"/></svg><i class="h-[2px] w-full bg-[#76b9ed]"></i></button>
  <button aria-label="Paint" class="flex w-[50px] flex-col items-center justify-end"><svg class="mb-[7px] h-[23px] w-[24px]" viewBox="0 0 24 23"><path d="M11 4c7-1 11 3 10 9-1 7-8 10-12 9-3-1 0-4-3-5S-1 16 1 11c1-4 5-6.500 10-7z" fill="#a9d5ef"/><circle cx="5" cy="13" r="2.200" fill="#d7433b"/><circle cx="9" cy="9" r="2.400" fill="#56b148"/><circle cx="14" cy="7.500" r="2.400" fill="#f6c643"/><path d="M20 3l2 1-8 18-2 1 1-4z" fill="#d98540"/><path d="M18 2l4-2 2 2-2 3-3 1z" fill="#a3673a"/></svg><i class="h-[2px] w-[40px] bg-[#76b9ed]"></i></button>
  <button aria-label="Excel" class="flex w-[49px] flex-col items-center justify-end"><svg class="mb-[7px] h-[22px] w-[22px]" viewBox="0 0 22 22"><path d="M3 0h16v5h3v16l-10 1-11-2Q-1 8 3 0z" fill="#67b057"/><path d="M5 2h13v3H7v13l-5 1Q1 9 5 2z" fill="#e3f3de"/><path d="M6 5l16 1v15L6 19z" fill="#f5fbf3"/><path d="M8 6l6 7M14 6l-6 7" stroke="#2f7d32" stroke-width="2"/><path d="M16 7h5v2h-5zM16 11h5v2h-5zM7 15h3v3H7zM12 15h4v3h-4zM17 15h4v3h-4z" fill="#57a653"/></svg><i class="h-[2px] w-[40px] bg-[#76b9ed]"></i></button>
  <button aria-label="Photos" class="flex w-[49px] flex-col items-center justify-end"><svg class="mb-[7px] h-[22px] w-[22px]" viewBox="0 0 22 22"><path d="M.5.500h21v21H.5z" fill="#0e1a08" stroke="#fff"/><path d="M1 15l7-8 5 6 2-4 2 3 1-1 3 4v6H1z" fill="#fff"/></svg><i class="h-[2px] w-[40px] bg-[#76b9ed]"></i></button>
  <div class="ml-auto flex items-center">
    <button aria-label="People"><svg class="h-[16px] w-[15px]" viewBox="0 0 15 16" fill="none" stroke="#fff" stroke-width="1.200"><circle cx="10.500" cy="3.500" r="2.700"/><path d="M8 7.500q6-1.500 6.400 4.500"/><circle cx="5" cy="8" r="2.500"/><path d="M.6 15.500q0-5 4.400-5t4.400 5"/></svg></button>
    <button aria-label="Show hidden icons" class="ml-[22px]"><svg class="h-[7px] w-[12px]" viewBox="0 0 12 7"><path d="M.5 6.500L6 1l5.500 5.500" fill="none" stroke="#fff" stroke-width="1.300"/></svg></button>
    <button aria-label="Battery" class="ml-[10px]"><svg class="h-[12px] w-[16px]" viewBox="0 0 16 12" fill="none" stroke="#fff"><path d="M4 3.500h10.500v7h-10M15.500 5.500v3M1.500 0v2M4.500 0v2M.5 2.500h5v2l-1 1h-3l-1-1zM3 6v4.500h2"/><path d="M6 5h4v4H6z" fill="#fff" stroke="none"/></svg></button>
    <button aria-label="Volume" class="ml-[8px]"><svg class="h-[13px] w-[17px]" viewBox="0 0 17 13" fill="none" stroke="#fff"><path d="M.5 4.500h2l4-4v12l-4-4h-2zM9 4q1.500 2.500 0 5M11.500 2.500q2.500 4 0 8M14 1q3.500 5.500 0 11"/></svg></button>
    <span class="ml-[11px] w-[22px] text-[12px]">IND</span>
    <time class="ml-[8px] w-[66px] text-center text-[11px] leading-[18px] whitespace-nowrap">12.23<br>29/09/2018</time>
    <button aria-label="3 notifications" class="relative ml-[13px] mr-[14px]"><svg class="h-[26px] w-[25px]" viewBox="0 0 25 26"><path d="M1 4h16v13H9l-4 4v-4H1z" fill="#fff"/><path d="M4 7.500h10M4 10.500h10M4 13.500h6" stroke="#0e1a08"/><circle cx="16.500" cy="18" r="7.500" fill="#3a3a3a" stroke="#888"/><text x="16.500" y="22" text-anchor="middle" font-family="Open Sans" font-size="11" fill="#fff">3</text></svg></button>
    <i class="h-full w-px bg-[#5c6458]"></i><i class="w-[2px]"></i>
  </div>
</footer>

<!-- Office button -->
<button aria-label="Office Button" class="absolute left-[3px] top-[3px]"><svg class="h-[39px] w-[39px]" viewBox="0 0 39 39"><defs><radialGradient id="orb" cx=".5" cy=".3" r=".75"><stop offset="0" stop-color="#fff"/><stop offset=".6" stop-color="#d5dde8"/><stop offset=".85" stop-color="#aebccd"/><stop offset="1" stop-color="#e8f1fb"/></radialGradient></defs><circle cx="19.500" cy="19.500" r="18.500" fill="url(#orb)" stroke="#7289ab"/><g fill="none"><path d="M13 18H9.500V10l9-1v5" stroke="#e4531c" stroke-width="3"/><path d="M18 12v6h-6" stroke="#e4531c" stroke-width="2"/><path d="M21.500 14h6v5h-6z" stroke="#3d8fdb" stroke-width="2"/><path d="M11.500 22h6v7h-6z" stroke="#f5b82e" stroke-width="2.400"/><path d="M21.500 22.500h7v6h-7z" stroke="#6cb33f" stroke-width="2.600"/></g></svg></button>

<!-- Margins gallery -->
<div role="menu" class="absolute left-[131px] top-[121px] flex w-[264px] flex-col border border-[#868686] bg-[#fafafa] text-[#00156e] shadow-[3px_3px_3px_rgba(0,0,0,0.35)]">
  <button role="menuitem" class="flex h-[60px] items-start text-left"><svg class="ml-[12px] mt-[6px] h-[47px] w-[37px]" viewBox="0 0 37 47"><use href="#thumb"/><path d="M6.500 0v46M30.500 0v46M0 6.500h36M0 40.500h36" stroke="#8aa3c2"/><path d="M18.500 15l2.500 5.500 6 .5-4.500 4 1.500 6-5.500-3-5.500 3 1.500-6-4.500-4 6-.5z" fill="#ffd83a" stroke="#c99a3c"/></svg><span class="ml-[20px] mt-[3px] grid grid-cols-[45px_56px_45px_1fr] whitespace-nowrap"><b class="col-span-4">Last Custom Setting</b><span>Top:</span><span>3 cm</span><span>Bottom:</span><span>3 cm</span><span>Left:</span><span>4 cm</span><span>Right:</span><span>3 cm</span></span></button>
  <button role="menuitem" class="flex h-[60px] items-start text-left"><svg class="ml-[12px] mt-[6px] h-[47px] w-[37px]" viewBox="0 0 37 47"><use href="#thumb"/><path d="M6.500 0v46M30.500 0v46M0 7.500h36M0 39.500h36" stroke="#8aa3c2"/></svg><span class="ml-[20px] mt-[3px] grid grid-cols-[45px_56px_45px_1fr] whitespace-nowrap"><b class="col-span-4">Normal</b><span>Top:</span><span>2,54 cm</span><span>Bottom:</span><span>2,54 cm</span><span>Left:</span><span>2,54 cm</span><span>Right:</span><span>2,54 cm</span></span></button>
  <button role="menuitem" class="flex h-[60px] items-start text-left"><svg class="ml-[12px] mt-[6px] h-[47px] w-[37px]" viewBox="0 0 37 47"><use href="#thumb"/><path d="M3.500 0v46M32.500 0v46M0 3.500h36M0 43.500h36" stroke="#8aa3c2"/></svg><span class="ml-[20px] mt-[3px] grid grid-cols-[45px_56px_45px_1fr] whitespace-nowrap"><b class="col-span-4">Narrow</b><span>Top:</span><span>1,27 cm</span><span>Bottom:</span><span>1,27 cm</span><span>Left:</span><span>1,27 cm</span><span>Right:</span><span>1,27 cm</span></span></button>
  <button role="menuitem" class="flex h-[60px] items-start text-left"><svg class="ml-[12px] mt-[6px] h-[47px] w-[37px]" viewBox="0 0 37 47"><use href="#thumb"/><path d="M5.500 0v46M31.500 0v46M0 7.500h36M0 39.500h36" stroke="#8aa3c2"/></svg><span class="ml-[20px] mt-[3px] grid grid-cols-[45px_56px_45px_1fr] whitespace-nowrap"><b class="col-span-4">Moderate</b><span>Top:</span><span>2,54 cm</span><span>Bottom:</span><span>2,54 cm</span><span>Left:</span><span>1,91 cm</span><span>Right:</span><span>1,91 cm</span></span></button>
  <button role="menuitem" class="flex h-[60px] items-start text-left"><svg class="ml-[12px] mt-[6px] h-[47px] w-[37px]" viewBox="0 0 37 47"><use href="#thumb"/><path d="M10.500 0v46M26.500 0v46M0 7.500h36M0 39.500h36" stroke="#8aa3c2"/></svg><span class="ml-[20px] mt-[3px] grid grid-cols-[45px_56px_45px_1fr] whitespace-nowrap"><b class="col-span-4">Wide</b><span>Top:</span><span>2,54 cm</span><span>Bottom:</span><span>2,54 cm</span><span>Left:</span><span>5,08 cm</span><span>Right:</span><span>5,08 cm</span></span></button>
  <button role="menuitem" class="flex h-[60px] items-start text-left"><svg class="ml-[7px] mt-[15px] h-[30px] w-[48px]" viewBox="0 0 48 30"><path d="M.5.500h23v29H.5zM24.500.500h23v29h-23z" fill="url(#paper)" stroke="#8aa3c2"/><path d="M3.500 0v29M18.500 0v29M29.500 0v29M44.500 0v29M0 3.500h48M0 26.500h48" stroke="#8aa3c2"/><path d="M23.500 1v28.500H1M47.500 1v28.500H25" fill="none" stroke="#1f3a66" stroke-width="1.300"/></svg><span class="ml-[14px] mt-[3px] grid grid-cols-[45px_56px_45px_1fr] whitespace-nowrap"><b class="col-span-4">Mirrored</b><span>Top:</span><span>2,54 cm</span><span>Bottom:</span><span>2,54 cm</span><span>Inside:</span><span>3,18 cm</span><span>Outside:</span><span>2,54 cm</span></span></button>
  <div class="mx-px border-t border-[#c5c5c5]"></div>
  <button role="menuitem" class="mx-px mb-px mt-px h-[22px] rounded-[2px] border border-[#d8b85a] bg-linear-to-b from-[#fffbe6] via-[#ffe48f] via-50% to-[#ffd65c] pb-[2px] pl-[32px] text-left">Custom M<u>a</u>rgins...</button>
</div>

<div role="tooltip" class="absolute left-[314px] top-[522px] h-[24px] w-[94px] rounded-[2px] border border-[#767676] bg-linear-to-b from-white to-[#c9d9ef] text-center leading-[22px] whitespace-nowrap text-[#4c4c4c] shadow-[2px_2px_2px_rgba(0,0,0,0.35)]">Custom Margins</div>

<!-- Red annotation ellipses -->
<svg class="pointer-events-none absolute left-0 top-0 h-[540px] w-[300px]" viewBox="0 0 300 540" fill="none" stroke="#ed1c24" stroke-width="5"><ellipse cx="155" cy="84" rx="38.500" ry="43.500"/><ellipse cx="209" cy="497.500" rx="62.500" ry="22"/></svg>

<script>
  // Ruler: one number per centimetre, a tick at each half and dots at the quarters.
  const ns = 'http://www.w3.org/2000/svg', ruler = document.getElementById('ruler');
  const add = (tag, attrs, text) => {
    const el = document.createElementNS(ns, tag);
    for (const k in attrs) el.setAttribute(k, attrs[k]);
    if (text) el.textContent = text;
    ruler.appendChild(el);
  };
  const step = 33.85;
  for (let n = 0; n <= 18; n++) {
    const x = 68 + n * step;
    if (n && n !== 16) add('text', {x, y: 16, 'text-anchor': 'middle', 'font-size': 9, fill: '#5a6274'}, String(n));
    add('path', {d: `M${Math.round(x + step / 2) + .5} 10v5`, stroke: '#5a6274'});
    for (const q of [.25, .75]) if (n < 18 || q < .5) add('path', {d: `M${Math.round(x + step * q)} 12.500h1`, stroke: '#5a6274'});
  }
  add('path', {d: 'M63.500 5.500h9l-4 6 4 6h-9l4-6zM63.500 17.500h9v5h-9z', fill: '#dfe8f4', stroke: '#6b86ae'});
  add('path', {d: 'M334 16h8v2h-8zM337 12h1v4h-1z', fill: '#24344f'});
  add('path', {d: 'M604.500 18.500l5-6 4 6z', fill: '#dfe8f4', stroke: '#4a5f86'});
  add('path', {d: 'M603 19l6-5v5z', fill: '#24344f'});
</script>
</body>
</html>
